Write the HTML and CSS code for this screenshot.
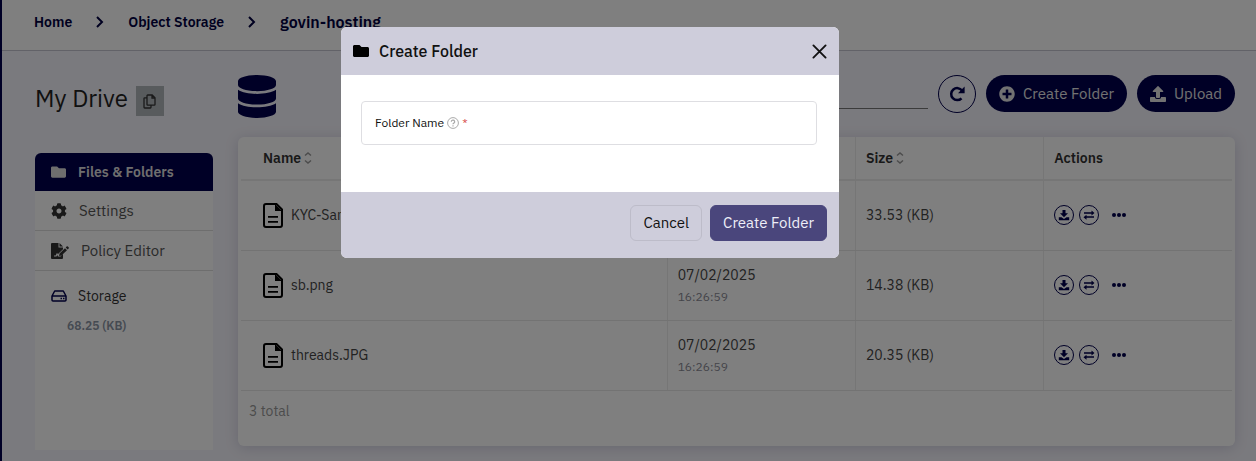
FILE: index.html
```
<!DOCTYPE html>
<html lang="en">
<head>
    <meta charset="UTF-8">
    <meta name="viewport" content="width=device-width, initial-scale=1.0">
    <title>Object Storage - govin-hosting</title>
    <link rel="stylesheet" href="styles.css">
</head>
<body>
    <!-- Shared icons -->
    <svg class="sprite" aria-hidden="true">
        <symbol id="i-folder" viewBox="0 64 512 384"><path d="M464 128H272l-64-64H48C21.500 64 0 85.500 0 112v288c0 26.500 21.500 48 48 48h416c26.500 0 48-21.500 48-48V176c0-26.500-21.500-48-48-48z"/></symbol>
        <symbol id="i-chevron" viewBox="0 0 10 12"><path d="M2 1l5 5-5 5" fill="none" stroke="currentColor" stroke-width="2"/></symbol>
        <symbol id="i-sort" viewBox="0 0 8 12"><path d="M1 3.500l3-2.500 3 2.500M1 8.500l3 2.500 3-2.500" fill="none" stroke="currentColor" stroke-width="1.500"/></symbol>
        <symbol id="i-file" viewBox="0 0 20 25"><path d="M3 1h10.500l5.500 5.500V22a2 2 0 0 1-2 2H3a2 2 0 0 1-2-2V3a2 2 0 0 1 2-2z" fill="none" stroke="currentColor" stroke-width="2"/><path d="M12 1v7h7zM5 13h10v1.700H5zM5 18h10v1.700H5z"/></symbol>
        <symbol id="i-download" viewBox="0 0 12 12"><path d="M4.500 1h3v3.300h2.500L6 8.300 2 4.300h2.500zM.8 8.200h2.700L6 10l2.500-1.800h2.700V11.200H.8z"/></symbol>
        <symbol id="i-swap" viewBox="0 0 12 12"><path d="M1 3.200h7.500V1.500L11.500 4l-3 2.500V4.700H1zM11 7.300H3.500V5.800L.5 8.200l3 2.500V8.800H11z"/></symbol>
        <symbol id="i-dots" viewBox="0 0 14 4"><circle cx="2" cy="2" r="2"/><circle cx="7" cy="2" r="2"/><circle cx="12" cy="2" r="2"/></symbol>
    </svg>

    <div class="app">
        <header class="topbar">
            <nav class="breadcrumb" aria-label="Breadcrumb">
                <a href="#">Home</a>
                <svg class="chevron"><use href="#i-chevron"/></svg>
                <a href="#">Object Storage</a>
                <svg class="chevron"><use href="#i-chevron"/></svg>
                <a href="#" class="current">govin-hosting</a>
            </nav>
        </header>

        <div class="content">
            <!-- Left column -->
            <aside class="side">
                <div class="drive-title">
                    <h1>My Drive</h1>
                    <button class="copy-btn" aria-label="Copy">
                        <svg viewBox="0 0 13 15"><path d="M4.700 1h4.500L12 3.800v6.700a.7.7 0 0 1-.7.7H4.700a.7.7 0 0 1-.7-.7V1.700A.7.7 0 0 1 4.700 1zM9 1v3h3M4 3.800H1.700a.7.7 0 0 0-.7.7v8.800a.7.7 0 0 0 .7.7h5.600a.7.7 0 0 0 .7-.7v-2" fill="none" stroke="currentColor" stroke-width="1.300"/></svg>
                    </button>
                </div>
                <div class="side-panel">
                    <nav class="menu">
                        <a href="#" class="active"><svg class="icon-folder"><use href="#i-folder"/></svg>Files &amp; Folders</a>
                        <a href="#"><svg viewBox="0 0 512 512"><path d="M487.400 315.700l-42.600-24.600c4.300-23.200 4.300-47 0-70.200l42.600-24.600c4.900-2.800 7.100-8.600 5.500-14-11.100-35.600-30-67.800-54.700-94.600-3.800-4.100-10-5.100-14.800-2.300L380.800 110c-17.900-15.400-38.500-27.300-60.800-35.100V25.800c0-5.600-3.900-10.500-9.400-11.700-36.700-8.200-74.300-7.800-109.200 0-5.500 1.200-9.400 6.100-9.400 11.700V75c-22.200 7.900-42.800 19.800-60.800 35.100L88.700 85.500c-4.900-2.800-11-1.900-14.800 2.300-24.700 26.700-43.600 58.900-54.700 94.600-1.700 5.400.6 11.200 5.500 14L67.300 221c-4.300 23.200-4.300 47 0 70.200l-42.600 24.600c-4.900 2.800-7.100 8.600-5.500 14 11.100 35.600 30 67.800 54.700 94.600 3.800 4.100 10 5.100 14.800 2.300l42.600-24.600c17.900 15.400 38.500 27.300 60.800 35.100v49.200c0 5.600 3.900 10.500 9.400 11.700 36.700 8.200 74.300 7.800 109.200 0 5.500-1.200 9.400-6.100 9.400-11.700v-49.200c22.200-7.900 42.800-19.800 60.800-35.100l42.600 24.600c4.900 2.800 11 1.900 14.800-2.300 24.700-26.700 43.600-58.900 54.700-94.600 1.500-5.500-.7-11.300-5.600-14.100zM256 336c-44.100 0-80-35.900-80-80s35.900-80 80-80 80 35.900 80 80-35.900 80-80 80z"/></svg>Settings</a>
                        <a href="#"><svg class="icon-policy" viewBox="0 0 18 16"><path d="M1 0h6.500v4.500H12v1.700L7.300 10.800 7 11.500l-1-1.800-1.300 2.800H3v1h2.500L6.300 12l.7 1.500h2.500l2.500-2.300V15a1 1 0 0 1-1 1H1a1 1 0 0 1-1-1V1a1 1 0 0 1 1-1zM8.500 0L12 3.500H8.500zM14 5.200l2 2-5.500 5.300-2.400.4.400-2.400zM14.700 4.500l.9-.9a1 1 0 0 1 1.300 0l.7.700a1 1 0 0 1 0 1.300l-.9.9z"/></svg>Policy Editor</a>
                    </nav>
                    <div class="storage">
                        <div class="storage-label">
                            <svg viewBox="0 0 16 12"><path d="M3.700 1h8.600L15 6v4a1 1 0 0 1-1 1H2a1 1 0 0 1-1-1V6zM1 6h14M9.500 8.500h1.500M12 8.500h1.500" fill="none" stroke="currentColor" stroke-width="1.500" stroke-linejoin="round"/></svg>
                            Storage
                        </div>
                        <div class="storage-size">68.25 (KB)</div>
                    </div>
                </div>
            </aside>

            <!-- Files -->
            <main class="files">
                <div class="toolbar">
                    <svg class="db-icon" viewBox="0 0 448 512" preserveAspectRatio="none"><path d="M448 73v46c0 40-100 73-224 73S0 159 0 119V73C0 33 100 0 224 0s224 33 224 73zM448 176v103c0 40-100 73-224 73S0 319 0 279V176c48 33 136 49 224 49s176-16 224-49zm0 160v103c0 40-100 73-224 73S0 479 0 439V336c48 33 136 49 224 49s176-16 224-49z"/></svg>
                    <input type="text" class="search" aria-label="Search">
                    <button class="refresh-btn" aria-label="Refresh">
                        <svg viewBox="0 0 16 16"><path d="M12.500 12.300A6 6 0 1 1 13 4.500" fill="none" stroke="currentColor" stroke-width="2.500"/><path d="M15.600.5v6.700H9z"/></svg>
                    </button>
                    <button class="pill-btn">
                        <svg viewBox="0 0 512 512"><path d="M256 8C119 8 8 119 8 256s111 248 248 248 248-111 248-248S393 8 256 8zm144 276c0 6.600-5.400 12-12 12h-92v92c0 6.600-5.400 12-12 12h-56c-6.600 0-12-5.400-12-12v-92h-92c-6.600 0-12-5.400-12-12v-56c0-6.600 5.400-12 12-12h92v-92c0-6.600 5.400-12 12-12h56c6.600 0 12 5.400 12 12v92h92c6.600 0 12 5.400 12 12v56z"/></svg>
                        Create Folder
                    </button>
                    <button class="pill-btn">
                        <svg viewBox="0 0 512 512"><path d="M296 384h-80c-13.300 0-24-10.700-24-24V192h-87.700c-17.800 0-26.700-21.500-14.100-34.100L242.300 5.700c7.500-7.500 19.800-7.500 27.300 0l152.200 152.200c12.600 12.600 3.700 34.100-14.100 34.100H320v168c0 13.300-10.700 24-24 24zm216-8v112c0 13.300-10.700 24-24 24H24c-13.300 0-24-10.700-24-24V376c0-13.300 10.700-24 24-24h136v8c0 30.900 25.100 56 56 56h80c30.900 0 56-25.100 56-56v-8h136c13.300 0 24 10.700 24 24z"/></svg>
                        Upload
                    </button>
                </div>

                <div class="card">
                    <table>
                        <thead>
                            <tr>
                                <th class="col-name">Name <svg class="sort"><use href="#i-sort"/></svg></th>
                                <th class="col-date">Date <svg class="sort"><use href="#i-sort"/></svg></th>
                                <th class="col-size">Size <svg class="sort"><use href="#i-sort"/></svg></th>
                                <th>Actions</th>
                            </tr>
                        </thead>
                        <tbody>
                            <tr>
                                <td><div class="file"><svg><use href="#i-file"/></svg>KYC-Sample.pdf</div></td>
                                <td class="date"></td>
                                <td>33.53 (KB)</td>
                                <td>
                                    <div class="actions">
                                        <button class="round" aria-label="Download"><svg><use href="#i-download"/></svg></button>
                                        <button class="round" aria-label="Move"><svg><use href="#i-swap"/></svg></button>
                                        <button class="more" aria-label="More"><svg><use href="#i-dots"/></svg></button>
                                    </div>
                                </td>
                            </tr>
                            <tr>
                                <td><div class="file"><svg><use href="#i-file"/></svg>sb.png</div></td>
                                <td class="date">07/02/2025<span class="time">16:26:59</span></td>
                                <td>14.38 (KB)</td>
                                <td>
                                    <div class="actions">
                                        <button class="round" aria-label="Download"><svg><use href="#i-download"/></svg></button>
                                        <button class="round" aria-label="Move"><svg><use href="#i-swap"/></svg></button>
                                        <button class="more" aria-label="More"><svg><use href="#i-dots"/></svg></button>
                                    </div>
                                </td>
                            </tr>
                            <tr>
                                <td><div class="file"><svg><use href="#i-file"/></svg>threads.JPG</div></td>
                                <td class="date">07/02/2025<span class="time">16:26:59</span></td>
                                <td>20.35 (KB)</td>
                                <td>
                                    <div class="actions">
                                        <button class="round" aria-label="Download"><svg><use href="#i-download"/></svg></button>
                                        <button class="round" aria-label="Move"><svg><use href="#i-swap"/></svg></button>
                                        <button class="more" aria-label="More"><svg><use href="#i-dots"/></svg></button>
                                    </div>
                                </td>
                            </tr>
                        </tbody>
                    </table>
                    <div class="total">3 total</div>
                </div>
            </main>
        </div>
    </div>

    <!-- Create folder dialog -->
    <div class="overlay">
        <form class="modal" role="dialog" aria-labelledby="modalTitle">
            <div class="modal-header">
                <svg class="modal-icon"><use href="#i-folder"/></svg>
                <h2 id="modalTitle">Create Folder</h2>
                <button type="button" class="close-btn" aria-label="Close">
                    <svg viewBox="0 0 16 16"><path d="M1.500 1.500l13 13M14.500 1.500l-13 13" fill="none" stroke="currentColor" stroke-width="2" stroke-linecap="round"/></svg>
                </button>
            </div>
            <div class="modal-body">
                <div class="field">
                    <label for="folderName">Folder Name
                        <svg viewBox="0 0 12 12"><circle cx="6" cy="6" r="5.400" fill="none" stroke="currentColor"/><path d="M4.300 4.700a1.700 1.600 0 1 1 2.500 1.400Q6 6.500 6 7.300M6 8.300v1.200" fill="none" stroke="currentColor" stroke-width="1.200"/></svg>
                        <span class="required">*</span>
                    </label>
                    <input type="text" id="folderName" required>
                </div>
            </div>
            <div class="modal-footer">
                <button type="button" class="btn">Cancel</button>
                <button type="submit" class="btn btn-primary">Create Folder</button>
            </div>
        </form>
    </div>
</body>
</html>
```

FILE: styles.css
```
* {
    box-sizing: border-box;
}

body {
    margin: 0;
    height: 100vh;
    overflow: hidden;
    font-family: 'IBM Plex Sans', 'Noto Sans', sans-serif;
    font-size: 14px;
    line-height: 20px;
    color: #444;
    background: #f5f4fc;
}

svg {
    fill: currentColor;
    flex-shrink: 0;
}

button, input {
    font: inherit;
    color: inherit;
}

button {
    display: flex;
    align-items: center;
    justify-content: center;
    padding: 0;
    border: none;
    background: none;
    cursor: pointer;
}

a {
    color: inherit;
    text-decoration: none;
}

.sprite {
    display: none;
}

.app {
    min-height: 100vh;
    border-left: 2px solid #00004c;
}

/* top bar */
.topbar {
    height: 51px;
    padding: 12px 32px;
    background: #fff;
    border-bottom: 1px solid #c4c4d0;
}

.breadcrumb {
    display: flex;
    align-items: center;
    gap: 23px;
    font-weight: 600;
    color: #000040;
}

.breadcrumb .current {
    font-size: 16px;
    font-weight: 600;
}

.chevron {
    width: 10px;
    height: 12px;
}

.content {
    display: flex;
    gap: 25px;
    padding: 24px 21px 0 33px;
}

/* left column */
.side {
    width: 178px;
    flex-shrink: 0;
}

.drive-title {
    display: flex;
    align-items: center;
    gap: 8px;
    height: 46px;
    margin-bottom: 32px;
}

.drive-title h1 {
    margin: 0;
    font-size: 24px;
    font-weight: 400;
    color: #222;
    white-space: nowrap;
}

.copy-btn {
    width: 28px;
    height: 30px;
    margin-top: 6px;
    color: #333;
    background: #b0b7bb;
}

.copy-btn svg {
    width: 13px;
    height: 15px;
}

.side-panel {
    min-height: 297px;
    background: #fff;
    border-radius: 6px 6px 0 0;
}

.menu a {
    display: flex;
    align-items: center;
    gap: 12px;
    height: 40px;
    padding: 0 16px;
    font-size: 15px;
    color: #555;
    border-bottom: 1px solid #dcdcdc;
}

.menu svg {
    width: 16px;
    height: 16px;
    color: #333;
}

.menu .icon-folder {
    width: 15px;
    height: 12px;
    color: #ddd;
}

.menu .icon-policy {
    width: 18px;
}

.menu .active {
    height: 38px;
    font-size: 14px;
    font-weight: 600;
    color: #ddd;
    background: #00004c;
    border: none;
    border-radius: 6px 6px 0 0;
}

.storage {
    padding: 15px 16px;
}

.storage-label {
    display: flex;
    align-items: center;
    gap: 11px;
    color: #333;
}

.storage-label svg {
    width: 16px;
    height: 12px;
    color: #00004c;
}

.storage-size {
    padding: 10px 16px;
    font-size: 12px;
    font-weight: 600;
    color: #8a94a4;
}

/* files */
.files {
    flex: 1;
    min-width: 0;
}

.toolbar {
    display: flex;
    align-items: flex-start;
    gap: 10px;
    height: 62px;
}

.db-icon {
    width: 38px;
    height: 43px;
    color: #00004c;
}

.search {
    flex: 1;
    min-width: 0;
    height: 34px;
    margin-left: 100px;
    border: none;
    border-bottom: 1px solid #777;
    background: none;
    outline: none;
}

.refresh-btn {
    width: 38px;
    height: 38px;
    border: 1px solid #00004c;
    border-radius: 50%;
    color: #00004c;
}

.refresh-btn svg {
    width: 16px;
    height: 16px;
}

.pill-btn {
    gap: 8px;
    height: 37px;
    padding: 0 13px;
    border-radius: 19px;
    font-size: 15px;
    color: #e4e4e4;
    background: #00004c;
    white-space: nowrap;
}

.pill-btn svg {
    width: 16px;
    height: 16px;
}

.card {
    padding: 0 3px;
    background: #fff;
    border-radius: 6px;
    box-shadow: 0 2px 14px rgba(0, 0, 60, 0.15);
}

table {
    width: 100%;
    table-layout: fixed;
    border-collapse: collapse;
}

th {
    height: 43px;
    padding: 0 10px;
    text-align: left;
    font-weight: 600;
    color: #333;
    border-bottom: 2px solid #ececec;
}

td {
    height: 70px;
    padding: 0 10px;
    border-bottom: 1px solid #e6e6e6;
}

th + th, td + td {
    border-left: 1px solid #ececec;
}

th:first-child, td:first-child {
    padding-left: 22px;
}

.col-name {
    width: 43%;
}

.col-date, .col-size {
    width: 19%;
}

.date {
    padding-top: 4px;
}

.sort {
    width: 8px;
    height: 12px;
    color: #999;
    vertical-align: -1px;
}

.file {
    display: flex;
    align-items: center;
    gap: 8px;
}

.file svg {
    width: 20px;
    height: 25px;
    color: #000;
}

.time {
    display: block;
    font-size: 12px;
    line-height: 24px;
    color: #8a8a94;
}

.actions {
    display: flex;
    align-items: center;
    gap: 5px;
    color: #00004c;
}

.actions .round {
    width: 20px;
    height: 20px;
    border: 1px solid #00004c;
    border-radius: 50%;
}

.actions .round svg {
    width: 12px;
    height: 12px;
}

.actions .more {
    margin-left: 8px;
}

.actions .more svg {
    width: 14px;
    height: 4px;
}

.total {
    padding: 10px 8px 25px;
    color: #999;
}

/* dialog */
.overlay {
    position: fixed;
    inset: 0;
    display: flex;
    align-items: flex-start;
    justify-content: center;
    padding: 27px 76px 0 0;
    background: rgba(0, 0, 0, 0.5);
}

.modal {
    width: 100%;
    max-width: 498px;
    overflow: hidden;
    background: #fff;
    border-radius: 6px;
    color: #111;
}

.modal-header {
    display: flex;
    align-items: center;
    gap: 10px;
    padding: 12px;
    background: #cecddb;
}

.modal-header h2 {
    flex: 1;
    margin: 0;
    font-size: 16px;
    line-height: 24px;
    font-weight: 500;
}

.modal-icon {
    width: 16px;
    height: 12px;
    color: #000;
}

.close-btn svg {
    width: 15px;
    height: 15px;
}

.modal-body {
    padding: 26px 22px 47px 20px;
}

.field {
    display: flex;
    align-items: center;
    height: 44px;
    padding: 0 13px;
    border: 1px solid #dedee2;
    border-radius: 4px;
}

.field label {
    display: flex;
    align-items: center;
    gap: 3px;
    font-size: 12px;
}

.field label svg {
    width: 12px;
    height: 12px;
    color: #aaa;
}

.field .required {
    color: #d9534f;
}

.field input {
    flex: 1;
    min-width: 0;
    border: none;
    outline: none;
    background: none;
}

.modal-footer {
    display: flex;
    justify-content: flex-end;
    gap: 8px;
    padding: 13px 12px 17px;
    background: #cecddb;
}

.btn {
    height: 36px;
    padding: 0 12px;
    border: 1px solid #bdbcc9;
    border-radius: 6px;
    font-size: 15px;
}

.btn-primary {
    color: #eeeef8;
    background: #4a467c;
    border-color: #4a467c;
}
```
